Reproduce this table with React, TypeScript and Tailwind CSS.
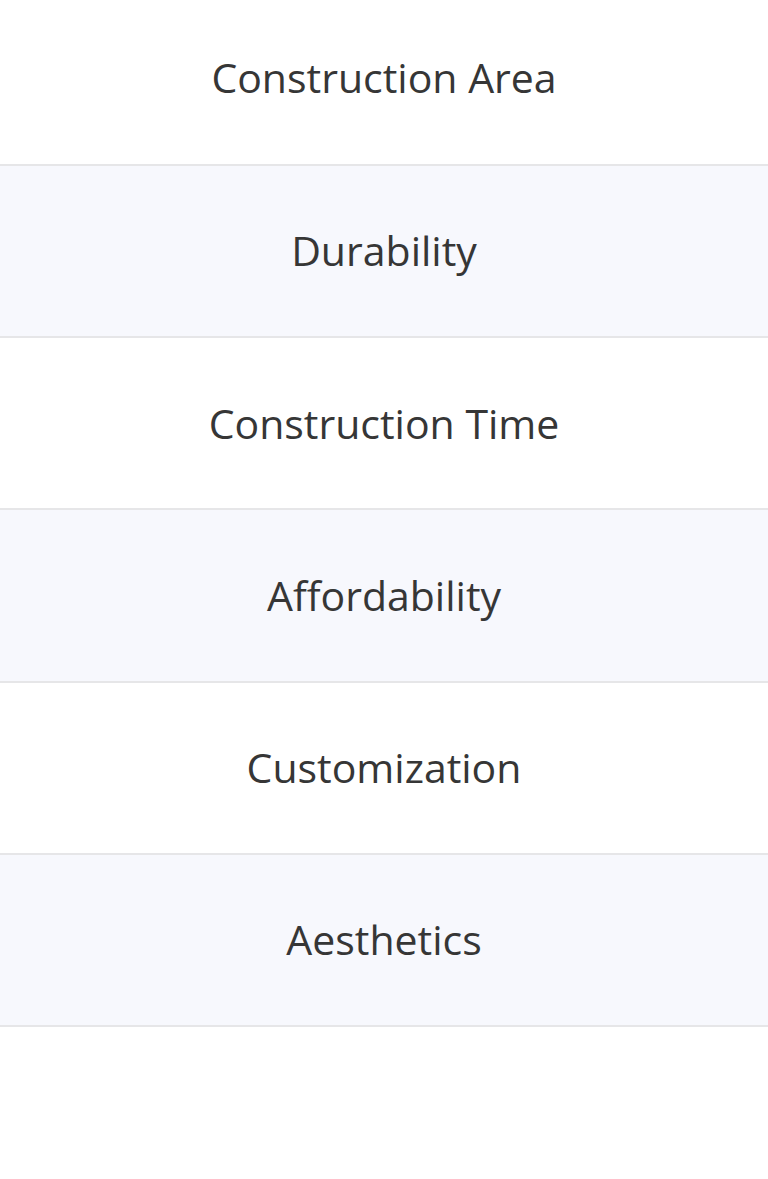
const items = [
  "Construction Area",
  "Durability",
  "Construction Time",
  "Affordability",
  "Customization",
  "Aesthetics",
];

export default function App() {
  return (
    <div
      className="w-full min-h-[1179px] bg-white"
      style={{ fontFamily: '"Open Sans", "Noto Sans", sans-serif' }}
    >
      {items.map((label, i) => (
        <div
          key={label}
          className={`flex items-center justify-center border-b-2 border-[#e6e6e8] ${
            i === 0 ? "h-[166px] pb-[8px]" : "h-[172.2px]"
          } ${i % 2 === 1 ? "bg-[#f7f8fd]" : "bg-white"}`}
        >
          <span className="text-[41px] text-[#363636]">{label}</span>
        </div>
      ))}
    </div>
  );
}
